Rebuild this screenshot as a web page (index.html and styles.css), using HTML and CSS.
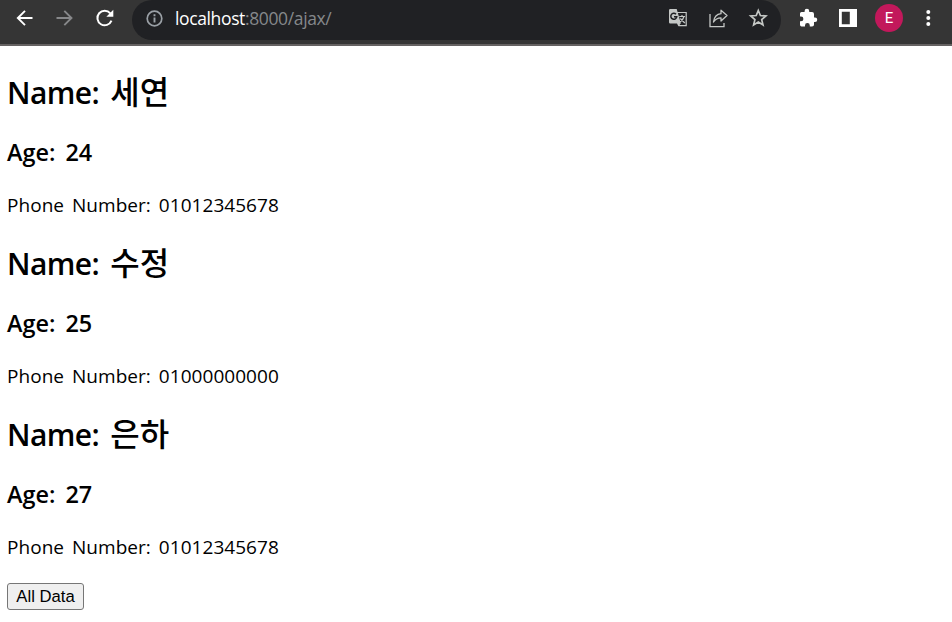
FILE: index.html
```html
<!DOCTYPE html>
<html lang="ko">
<head>
<meta charset="utf-8">
<title>Ajax</title>
<link rel="stylesheet" href="styles.css">
</head>
<body>
<header class="toolbar">
  <nav class="nav">
    <svg class="icon" viewBox="0 0 20 20"><path d="M18.500 10H4M11 2.800 3.800 10l7.200 7.200" fill="none" stroke="#fff" stroke-width="1.900"/></svg>
    <svg class="icon" viewBox="0 0 20 20"><path d="M2.500 10H17M10.300 2.800l7.200 7.200-7.200 7.200" fill="none" stroke="#87888a" stroke-width="1.900"/></svg>
    <svg class="icon" viewBox="0 0 20 20"><path d="M16.300 5.300A7.300 7.300 0 1 0 17.500 12.700" fill="none" stroke="#fff" stroke-width="2"/><path d="M19.300 1.800v7h-7z" fill="#fff"/></svg>
  </nav>
  <div class="address">
    <svg class="icon info" viewBox="0 0 20 20"><circle cx="10.500" cy="10.500" r="7.300" fill="none" stroke="#9aa0a6" stroke-width="1.700"/><path d="M10.500 9.500v5M10.500 6.300v2" stroke="#9aa0a6" stroke-width="1.900"/></svg>
    <span class="url"><span class="host">localhost</span>:8000/ajax/</span>
    <div class="actions">
      <svg class="icon" viewBox="0 0 20 20"><path d="M8 4.500h10.200v13.200H11" fill="none" stroke="#c4c7c5" stroke-width="1.200"/><path d="M1 2.200Q1 1 2.200 1h6.500l4.200 14.500H2.200Q1 15.500 1 14.300zM9 15.500h3.500l-2 3z" fill="#c4c7c5"/><path d="M8 6.200A3 3 0 1 0 8.800 8.700H6" fill="none" stroke="#202124" stroke-width="1.500"/><path d="M11.200 8.500h5.800M14 7v1.500M16 8.500q-.7 3-4 5.500M12.300 10.500l4.500 4.500" fill="none" stroke="#c4c7c5" stroke-width="1.200"/></svg>
      <svg class="icon" viewBox="0 0 20 20"><path d="M2 6v12.700h14V15" fill="none" stroke="#c4c7c5" stroke-width="1.300"/><path d="M13 2.300v3.400C8.500 6 6.200 9 5.500 14c1.800-3 4-4.200 7.500-4.200V13l6-5.500z" fill="none" stroke="#c4c7c5" stroke-width="1.300" stroke-linejoin="round"/></svg>
      <svg class="icon" viewBox="0 0 20 20"><path d="m10.300 2.500 2.100 5 5.500.5-4.200 3.600 1.300 5.400-4.700-2.900L5.600 17l1.300-5.400L2.700 8l5.500-.5z" fill="none" stroke="#c4c7c5" stroke-width="1.700"/></svg>
    </div>
  </div>
  <div class="tools">
    <svg class="icon" viewBox="0 0 20 20"><path d="M17 9.500h-1V6q0-2-2-2h-2.800V3a2.300 2.300 0 0 0-4.600 0v1H3.500Q2 4 2 5.500v3h1a2.400 2.400 0 0 1 0 4.800H2v3.500Q2 18.500 3.500 18.500H7v-1a2.400 2.400 0 0 1 4.800 0v1H14q2 0 2-1.700v-2.800h1a2.250 2.250 0 0 0 0-4.500z" fill="#fff"/></svg>
    <svg class="icon" viewBox="0 0 20 20"><path d="M1 1h18v18H1zM3.800 3.800v12.400h8V3.800z" fill="#fff" fill-rule="evenodd"/></svg>
    <span class="avatar">E</span>
    <svg class="icon" viewBox="0 0 20 20"><g fill="#fff"><circle cx="9.300" cy="4" r="2"/><circle cx="9.300" cy="10" r="2"/><circle cx="9.300" cy="16" r="2"/></g></svg>
  </div>
</header>
<main>
  <section class="person">
    <h2>Name: <span class="ko">세연</span></h2>
    <h3>Age: 24</h3>
    <p>Phone Number: 01012345678</p>
  </section>
  <section class="person">
    <h2>Name: <span class="ko">수정</span></h2>
    <h3>Age: 25</h3>
    <p>Phone Number: 01000000000</p>
  </section>
  <section class="person">
    <h2>Name: <span class="ko">은하</span></h2>
    <h3>Age: 27</h3>
    <p>Phone Number: 01012345678</p>
  </section>
  <button type="button">All Data</button>
</main>
</body>
</html>
```
FILE: styles.css
```css
* { box-sizing: border-box; }
body { margin: 0; background: #fff; color: #000; font-family: "Open Sans", "Noto Sans CJK KR", sans-serif; }
.toolbar { height: 46px; display: flex; align-items: flex-start; background: #353535; border-bottom: 2px solid #656262; }
.icon { width: 20px; height: 20px; display: block; flex: none; }
.nav { display: flex; gap: 20px; padding: 8px 0 0 14px; width: 132px; }
.address { width: 649px; height: 40px; padding: 0 13px 4px 12px; display: flex; align-items: center; background: #202124; border-radius: 20px; }
.url { margin-left: 11px; font-size: 17.5px; line-height: 24px; letter-spacing: -0.37px; color: #85888b; white-space: nowrap; }
.host { color: #fff; }
.actions { display: flex; gap: 20px; margin-left: auto; }
.tools { display: flex; align-items: center; height: 36px; padding-left: 17px; }
.tools .icon + .icon { margin-left: 20px; }
.avatar { width: 28px; height: 28px; margin: 0 16px 0 17px; border-radius: 50%; background: #c2185b; color: #fff; font: 15px/28px Roboto, sans-serif; text-align: center; }
main { padding: 27px 7px 0; }
.person { height: 171px; }
h2, h3, p { margin: 0; white-space: nowrap; }
h2 { font-size: 30px; line-height: 40px; font-weight: 600; letter-spacing: -0.6px; word-spacing: 4px; }
h3 { margin-top: 23px; font-size: 23.4px; line-height: 32px; font-weight: 600; word-spacing: 4px; }
p { margin-top: 23px; font-size: 19px; line-height: 28px; letter-spacing: 0.04px; word-spacing: 3px; }
.ko { font-family: "Noto Sans CJK KR", sans-serif; font-size: 32px; font-weight: 500; line-height: 1; letter-spacing: 0; }
button { display: block; width: 77px; height: 27px; margin-top: -3px; padding: 0; border: 1px solid #767676; border-radius: 3px; background: #efefef; color: #000; font: 16.67px/23px "Liberation Sans", sans-serif; }
```
